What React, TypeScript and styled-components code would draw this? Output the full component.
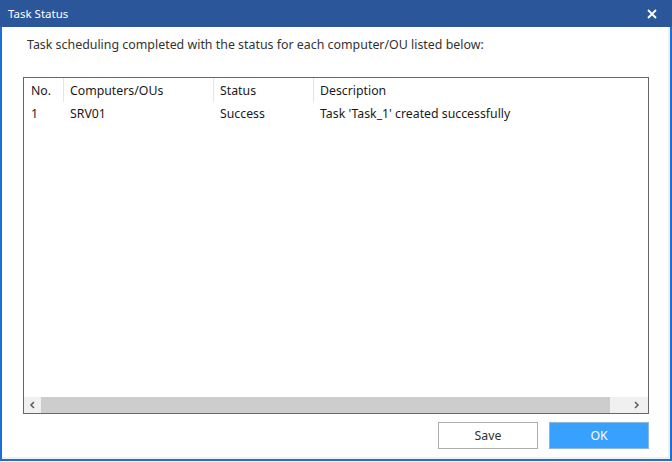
import styled, { createGlobalStyle } from 'styled-components'

const GlobalStyle = createGlobalStyle`
  * {
    box-sizing: border-box;
  }
  body {
    margin: 0;
    width: 672px;
    height: 462px;
    overflow: hidden;
    background: #ffffff;
    font-family: "Noto Sans", "Open Sans", sans-serif;
  }
`

const Window = styled.div`
  width: 672px;
  height: 461px;
  display: flex;
  flex-direction: column;
  border: 2px solid #1c6fd8;
  border-top: none;
  background: #f0f0f0;
`

const TitleBar = styled.div`
  height: 27px;
  margin: 0 -2px;
  background: #2b579a;
  display: flex;
  align-items: center;
  justify-content: space-between;
  padding: 0 14px 0 8px;
  color: #ffffff;
  font-size: 11.5px;
`

const CloseButton = styled.div`
  width: 12px;
  height: 12px;
  display: flex;
  align-items: center;
  justify-content: center;
`

const Body = styled.div`
  flex: 1;
  background: #ffffff;
  margin: 0 2px 2px 0;
  display: flex;
  flex-direction: column;
  padding: 10px 19px 0 21px;
`

const Message = styled.div`
  font-size: 12.4px;
  color: #333333;
  line-height: 16px;
  padding-left: 4px;
  margin-bottom: 24px;
`

const ListBox = styled.div`
  height: 337px;
  border: 1px solid #676767;
  display: flex;
  flex-direction: column;
`

const Grid = styled.div`
  flex: 1;
`

const Row = styled.div<{ $header?: boolean }>`
  display: grid;
  grid-template-columns: 39px 150px 100px 1fr;
  height: ${p => (p.$header ? '24px' : '22px')};
  align-items: center;
  font-size: 12.3px;
  color: #1a1a1a;
`

const Cell = styled.div<{ $sep?: boolean }>`
  height: 100%;
  display: flex;
  align-items: center;
  padding-left: 6px;
  border-left: ${p => (p.$sep ? '1px solid #e5e5e5' : '1px solid transparent')};
  white-space: nowrap;
`

const ScrollBar = styled.div`
  height: 16px;
  display: flex;
  background: #f0f0f0;
`

const ArrowButton = styled.div<{ $w: number }>`
  width: ${p => p.$w}px;
  display: flex;
  align-items: center;
  justify-content: center;
`

const Thumb = styled.div`
  flex: 1;
  background: #cdcdcd;
`

const Footer = styled.div`
  display: flex;
  justify-content: flex-end;
  gap: 11px;
  padding-top: 8px;
`

const Button = styled.div<{ $primary?: boolean }>`
  width: 100px;
  height: 27px;
  display: flex;
  align-items: center;
  justify-content: center;
  font-size: 12.3px;
  border: 1px solid ${p => (p.$primary ? '#8cb6e0' : '#adadad')};
  background: ${p => (p.$primary ? '#38a1ff' : '#ffffff')};
  color: ${p => (p.$primary ? '#ffffff' : '#333333')};
`

const rows = [{ no: '1', name: 'SRV01', status: 'Success', desc: "Task 'Task_1' created successfully" }]

export default function App() {
  return (
    <>
      <GlobalStyle />
      <Window>
        <TitleBar>
          <span>Task Status</span>
          <CloseButton>
            <svg width="10" height="10" viewBox="0 0 10 10">
              <path d="M1 1 L9 9 M9 1 L1 9" stroke="#ffffff" strokeWidth="1.8" />
            </svg>
          </CloseButton>
        </TitleBar>
        <Body>
          <Message>Task scheduling completed with the status for each computer/OU listed below:</Message>
          <ListBox>
            <Grid>
              <Row $header>
                <Cell>No.</Cell>
                <Cell $sep>Computers/OUs</Cell>
                <Cell $sep>Status</Cell>
                <Cell $sep>Description</Cell>
              </Row>
              {rows.map(r => (
                <Row key={r.no}>
                  <Cell>{r.no}</Cell>
                  <Cell>{r.name}</Cell>
                  <Cell>{r.status}</Cell>
                  <Cell>{r.desc}</Cell>
                </Row>
              ))}
            </Grid>
            <ScrollBar>
              <ArrowButton $w={17}>
                <svg width="7" height="8" viewBox="0 0 7 8">
                  <path d="M5 1 L2 4 L5 7" stroke="#606060" strokeWidth="1.6" fill="none" />
                </svg>
              </ArrowButton>
              <Thumb />
              <ArrowButton $w={38}>
                <svg width="7" height="8" viewBox="0 0 7 8" style={{ marginLeft: 14 }}>
                  <path d="M2 1 L5 4 L2 7" stroke="#606060" strokeWidth="1.6" fill="none" />
                </svg>
              </ArrowButton>
            </ScrollBar>
          </ListBox>
          <Footer>
            <Button>Save</Button>
            <Button $primary>OK</Button>
          </Footer>
        </Body>
      </Window>
    </>
  )
}
